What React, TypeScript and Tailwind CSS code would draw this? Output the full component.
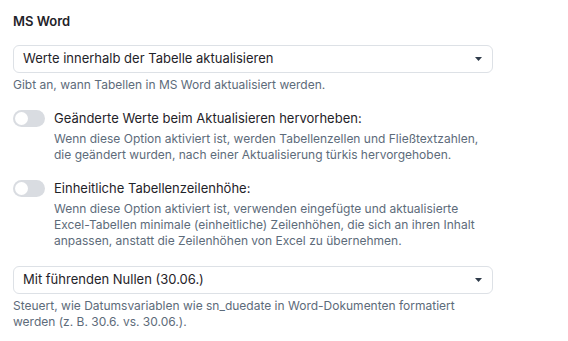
import React from "react";

interface ToggleRowProps {
  label: string;
  lines: string[];
}

function Caret() {
  return (
    <svg width="7" height="4" viewBox="0 0 7 4" className="text-[#2f3b4a]">
      <path d="M0 0h7L3.5 4z" fill="currentColor" />
    </svg>
  );
}

function SelectBox({ value }: { value: string }) {
  return (
    <div className="flex h-[28px] w-[480px] items-center justify-between rounded-[6px] border border-[#dde1e6] bg-white pl-[9px] pr-[10px] text-[13px] text-[#1f2329]">
      <span>{value}</span>
      <Caret />
    </div>
  );
}

function ToggleRow({ label, lines }: ToggleRowProps) {
  return (
    <div className="flex flex-col">
      <div className="flex items-center gap-[9px]">
        <div className="flex h-[17px] w-[32px] items-center rounded-full bg-[#d9dce1] px-[2px]">
          <div className="h-[13px] w-[13px] rounded-full bg-white" />
        </div>
        <span className="text-[13px] leading-[17px] text-[#1f2329]">{label}</span>
      </div>
      <div className="mt-[4px] pl-[41px] text-[12px] leading-[16px] text-[#5d6b7a]">
        {lines.map((l) => (
          <div key={l}>{l}</div>
        ))}
      </div>
    </div>
  );
}

export default function App() {
  return (
    <div
      className="h-[341px] w-[568px] bg-white px-[13px] pt-[11px]"
      style={{ fontFamily: "Inter, 'Noto Sans', sans-serif" }}
    >
      <h2 className="text-[13px] font-semibold leading-[20px] text-[#1f2329]">MS Word</h2>

      <div className="mt-[14px]">
        <SelectBox value="Werte innerhalb der Tabelle aktualisieren" />
        <p className="mt-[4px] text-[12px] leading-[16px] text-[#5d6b7a]">
          Gibt an, wann Tabellen in MS Word aktualisiert werden.
        </p>
      </div>

      <div className="mt-[17px]">
        <ToggleRow
          label="Geänderte Werte beim Aktualisieren hervorheben:"
          lines={[
            "Wenn diese Option aktiviert ist, werden Tabellenzellen und Fließtextzahlen,",
            "die geändert wurden, nach einer Aktualisierung türkis hervorgehoben.",
          ]}
        />
      </div>

      <div className="mt-[17px]">
        <ToggleRow
          label="Einheitliche Tabellenzeilenhöhe:"
          lines={[
            "Wenn diese Option aktiviert ist, verwenden eingefügte und aktualisierte",
            "Excel-Tabellen minimale (einheitliche) Zeilenhöhen, die sich an ihren Inhalt",
            "anpassen, anstatt die Zeilenhöhen von Excel zu übernehmen.",
          ]}
        />
      </div>

      <div className="mt-[17px]">
        <SelectBox value="Mit führenden Nullen (30.06.)" />
        <p className="mt-[4px] text-[12px] leading-[16px] text-[#5d6b7a]">
          Steuert, wie Datumsvariablen wie sn_duedate in Word-Dokumenten formatiert
          <br />
          werden (z. B. 30.6. vs. 30.06.).
        </p>
      </div>
    </div>
  );
}
